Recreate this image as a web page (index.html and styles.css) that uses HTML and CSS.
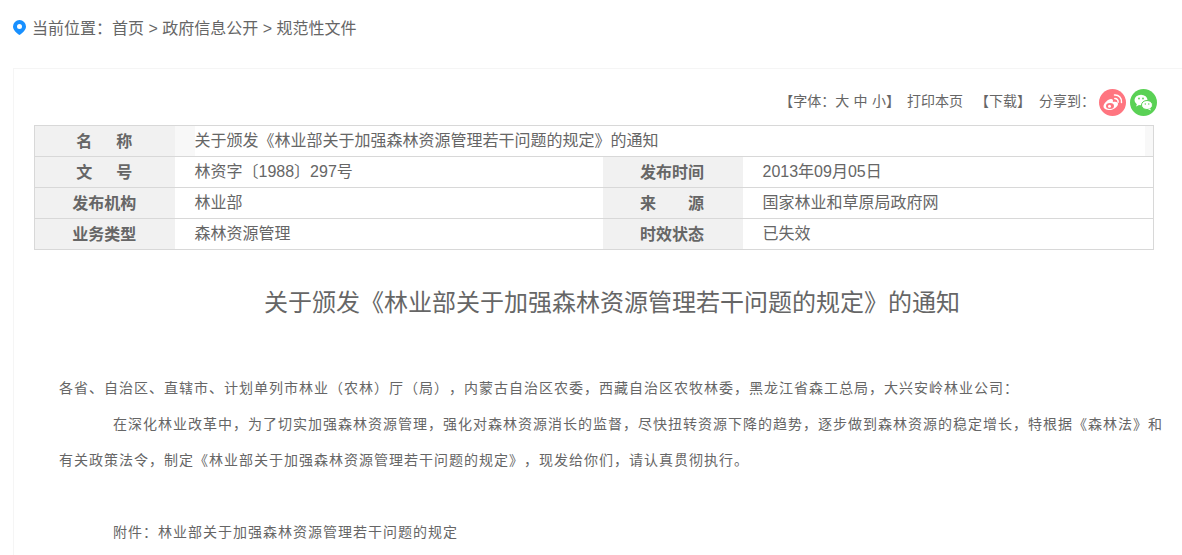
FILE: index.html
```html
<!DOCTYPE html>
<html lang="zh-CN">
<head>
    <meta charset="UTF-8">
    <title>关于颁发《林业部关于加强森林资源管理若干问题的规定》的通知</title>
    <link rel="stylesheet" href="styles.css">
</head>
<body>
    <div class="crumb">
        <svg class="pin" viewBox="0 0 13 15" width="13" height="15"><path fill="#1890ff" fill-rule="evenodd" d="M6.500 0a6.500 6.500 0 0 1 6.500 6.500c0 3.200-3.200 6.400-6.500 8.500C3.200 12.900 0 9.700 0 6.500A6.500 6.500 0 0 1 6.500 0zm0 4a2.500 2.500 0 1 0 0 5 2.500 2.500 0 0 0 0-5z"/></svg>
        <span class="crumb-text">当前位置：首页 &gt; 政府信息公开 &gt; 规范性文件</span>
    </div>

    <div class="card">
        <div class="tools">
            <span class="font-size">【字体：大 中 小】</span>
            <span class="print">打印本页</span>
            <span class="download">【下载】</span>
            <span class="share">分享到：</span>
            <svg class="share-icon" viewBox="0 0 27 27" width="27" height="27">
                <circle cx="13.500" cy="13.500" r="13.500" fill="#ff7580"/>
                <path d="M4.500 17.500c0-3 4.500-7.500 7.500-7.500 2 0 2.300 1.500 1.800 3 2.500-.8 5.200-.3 5.200 1.700 0 3-4.500 6.300-8.500 6.300-3.300 0-6-1.300-6-3.500z" fill="#fff"/>
                <ellipse cx="11" cy="17" rx="4" ry="3" fill="#ff7580"/>
                <circle cx="10.500" cy="17.200" r="1.500" fill="#fff"/>
                <path d="M15.500 6a6.500 6.500 0 0 1 7 7.500M15.800 9.500a3.300 3.300 0 0 1 3.300 3.700" fill="none" stroke="#fff" stroke-width="1.500" stroke-linecap="round"/>
            </svg>
            <svg class="share-icon" viewBox="0 0 27 27" width="27" height="27">
                <circle cx="13.500" cy="13.500" r="13.500" fill="#5ad155"/>
                <ellipse cx="11" cy="11" rx="6.500" ry="5.300" fill="#fff"/>
                <path d="M7 14.500l-.8 3 3.300-1.800z" fill="#fff"/>
                <ellipse cx="17" cy="16" rx="5.500" ry="4.500" fill="#fff" stroke="#5ad155"/>
                <path d="M20 19.500l1 2-3-1.200z" fill="#fff"/>
                <circle cx="9" cy="9.500" r=".9" fill="#5ad155"/>
                <circle cx="13" cy="9.500" r=".9" fill="#5ad155"/>
                <circle cx="15.300" cy="15" r=".7" fill="#5ad155"/>
                <circle cx="18.800" cy="15" r=".7" fill="#5ad155"/>
            </svg>
        </div>

        <table class="meta">
            <colgroup>
                <col class="col-label">
                <col class="col-left">
                <col class="col-label-right">
                <col>
            </colgroup>
            <tr>
                <th>名<span class="gap"></span>称</th>
                <td colspan="3" class="title-cell"><div>关于颁发《林业部关于加强森林资源管理若干问题的规定》的通知</div></td>
            </tr>
            <tr>
                <th>文<span class="gap"></span>号</th>
                <td>林资字〔1988〕297号</td>
                <th>发布时间</th>
                <td>2013年09月05日</td>
            </tr>
            <tr>
                <th>发布机构</th>
                <td>林业部</td>
                <th>来<span class="gap gap-wide"></span>源</th>
                <td>国家林业和草原局政府网</td>
            </tr>
            <tr>
                <th>业务类型</th>
                <td>森林资源管理</td>
                <th>时效状态</th>
                <td>已失效</td>
            </tr>
        </table>

        <h1>关于颁发《林业部关于加强森林资源管理若干问题的规定》的通知</h1>

        <div class="article">
            <p>各省、自治区、直辖市、计划单列市林业（农林）厅（局），内蒙古自治区农委，西藏自治区农牧林委，黑龙江省森工总局，大兴安岭林业公司：</p>
            <p class="indent">在深化林业改革中，为了切实加强森林资源管理，强化对森林资源消长的监督，尽快扭转资源下降的趋势，逐步做到森林资源的稳定增长，特根据《森林法》和有关政策法令，制定《林业部关于加强森林资源管理若干问题的规定》，现发给你们，请认真贯彻执行。</p>
            <p class="indent attachment">附件：林业部关于加强森林资源管理若干问题的规定</p>
        </div>
    </div>
</body>
</html>
```

FILE: styles.css
```css
html, body {
    height: 555px;
    overflow: hidden;
}

body {
    margin: 0;
    background: #fff;
    color: #666;
    font-family: "Liberation Sans", "Noto Sans CJK SC", sans-serif;
    text-spacing-trim: space-all;
}

.crumb {
    display: flex;
    align-items: center;
    height: 68px;
    padding: 0 0 13px 12px;
    box-sizing: border-box;
    font-size: 16px;
}

.pin {
    margin: 0 6px 0 1px;
}

.crumb-text {
    padding-bottom: 2px;
}

.card {
    margin-left: 13px;
    padding: 20px 0 0 20px;
    border: 1px solid #f5f5f5;
    border-right: 0;
    height: 600px;
}

.tools {
    display: flex;
    align-items: center;
    justify-content: flex-end;
    height: 27px;
    margin: 0 25px 9px 0;
    font-size: 14px;
}

.tools span {
    padding-bottom: 5px;
}

.font-size {
    word-spacing: .5px;
}

.tools .print {
    margin-left: 7px;
}

.tools .download {
    margin-left: 12px;
}

.tools .share {
    margin-left: 8px;
}

.share-icon {
    margin-left: 4px;
}

.meta {
    width: 1120px;
    border-collapse: collapse;
    table-layout: fixed;
    font-size: 16px;
}

.col-label {
    width: 140px;
}

.col-left {
    width: 428px;
}

.col-label-right {
    width: 140px;
}

.meta th, .meta td {
    box-sizing: border-box;
    height: 31px;
    border-top: 1px solid #d8d8d8;
    border-bottom: 1px solid #d8d8d8;
}

.meta th:first-child {
    border-left: 1px solid #d8d8d8;
}

.meta td:last-child {
    border-right: 1px solid #d8d8d8;
}

.meta th {
    padding: 0 1px 3px 0;
    background: #f1f1f1;
    font-weight: bold;
    text-align: center;
}

.meta td {
    padding: 0 0 5px 20px;
}

.meta .title-cell {
    padding: 0 8px 0 20px;
    background: #f8f8f8;
}

.title-cell div {
    height: 30px;
    line-height: 29px;
    background: #fff;
}

.gap {
    display: inline-block;
    width: 24px;
}

.gap-wide {
    width: 32px;
}

h1 {
    width: 1156px;
    margin: 38px 0 0;
    font-size: 24px;
    font-weight: normal;
    line-height: 30px;
    text-align: center;
}

.article {
    width: 1106px;
    margin: 52px 0 0 25px;
    font-size: 14px;
    line-height: 36px;
    letter-spacing: 1px;
}

.article p {
    margin: 0;
}

.indent {
    text-indent: 54px;
}

.article .attachment {
    margin-top: 36px;
}
```
